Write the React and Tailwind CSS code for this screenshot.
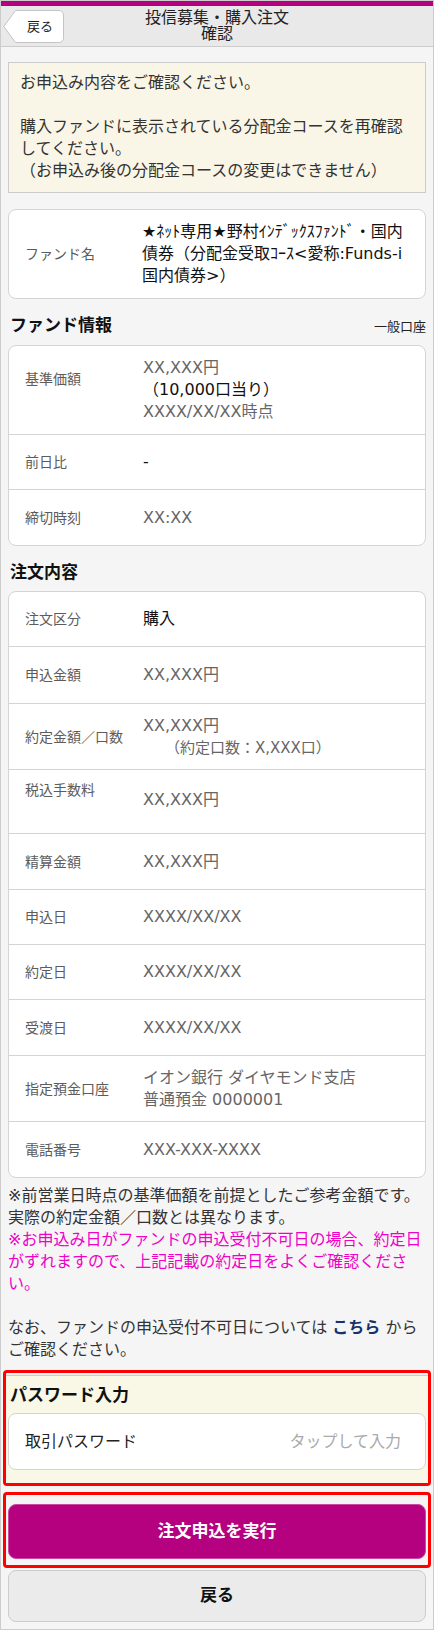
import React from 'react';

// 英数字は Verdana 系の幅に合わせて DejaVu Sans、和文は Noto Sans CJK JP
const font = { fontFamily: '"DejaVu Sans", "Noto Sans CJK JP", sans-serif' };

// 明細の1行（ラベル＋値）
const Row = ({ label, children, className, labelClass = '', valueClass = '', last = false }) => (
  <div className={`flex pl-4 pr-3 ${last ? '' : 'border-b border-[#d4d4d4]'} ${className}`}>
    <div className={`w-[118px] shrink-0 text-[14px] leading-[22px] text-[#5c5c5c] ${labelClass}`}>{label}</div>
    <div className={`flex-1 text-[16px] leading-[22px] ${valueClass}`}>{children}</div>
  </div>
);

const BackShape = () => (
  <svg width="61" height="33" viewBox="0 0 61 33" className="absolute left-0 top-0">
    <path
      d="M12.5 0.5 H56 a4.5 4.5 0 0 1 4.5 4.5 V28 a4.5 4.5 0 0 1 -4.5 4.5 H12.5 L0.8 16.5 Z"
      fill="#ffffff"
      stroke="#c4c4c4"
    />
  </svg>
);

const App = () => {
  return (
    <div style={font} className="w-[434px] h-[1630px] bg-[#f5f5f5] border border-[#cccccc] text-[#222]">
      {/* ヘッダー */}
      <div className="h-[5px] bg-[#b5007f]" />
      <div className="relative h-[41px] bg-[#e9e9e9] border-b border-[#cccccc] flex items-center justify-center">
        <button className="absolute left-[2px] top-[4px] w-[61px] h-[33px]">
          <BackShape />
          <span className="relative block pl-[24px] text-left text-[13px] leading-[33px] text-[#222]">戻る</span>
        </button>
        <div className="text-center text-[16px] leading-[16px] text-[#222]">
          <div>投信募集・購入注文</div>
          <div>確認</div>
        </div>
      </div>

      <div className="px-[7px]">
        {/* 注意書き */}
        <div className="mt-[15px] bg-[#faf6e7] border border-[#cccccc] pl-[11px] pr-[11px] pt-[9px] pb-[10px] text-[16px] leading-[22px] text-[#333]">
          <p>お申込み内容をご確認ください。</p>
          <p>&nbsp;</p>
          <p>購入ファンドに表示されている分配金コースを再確認してください。</p>
          <p>（お申込み後の分配金コースの変更はできません）</p>
        </div>

        {/* ファンド名 */}
        <div className="mt-[16px] bg-white border border-[#d4d4d4] rounded-[8px] flex items-center pl-4 pr-3 pt-[11px] pb-[11px]">
          <div className="w-[117px] shrink-0 text-[14px] leading-[22px] text-[#5c5c5c]">ファンド名</div>
          <div className="flex-1 text-[16px] leading-[22px] text-[#111] whitespace-nowrap">
            ★ﾈｯﾄ専用★野村ｲﾝﾃﾞｯｸｽﾌｧﾝﾄﾞ・国内<br />
            債券（分配金受取ｺｰｽ&lt;愛称:Funds-i<br />
            国内債券&gt;）
          </div>
        </div>

        {/* ファンド情報 */}
        <div className="mt-[15px] mb-[9px] flex items-end justify-between pl-[2px]">
          <h2 className="text-[17px] leading-[22px] font-bold text-[#111]">ファンド情報</h2>
          <span className="text-[13px] leading-[18px] text-[#222]">一般口座</span>
        </div>
        <div className="bg-white border border-[#d4d4d4] rounded-[8px]">
          <Row label="基準価額" className="items-start h-[89px] pt-[11px]" labelClass="pt-[11px]">
            <div className="text-[#666]">XX,XXX円</div>
            <div className="text-[#111]">（10,000口当り）</div>
            <div className="text-[#666]">XXXX/XX/XX時点</div>
          </Row>
          <Row label="前日比" className="items-center h-[55px]" valueClass="text-[#111]">-</Row>
          <Row label="締切時刻" className="items-center h-[55px]" valueClass="text-[#666]" last>XX:XX</Row>
        </div>

        {/* 注文内容 */}
        <h2 className="mt-[15px] mb-[8px] pl-[2px] text-[17px] leading-[22px] font-bold text-[#111]">注文内容</h2>
        <div className="bg-white border border-[#d4d4d4] rounded-[8px]">
          <Row label="注文区分" className="items-center h-[55px]" valueClass="text-[#111]">購入</Row>
          <Row label="申込金額" className="items-center h-[57px]" valueClass="text-[#666]">XX,XXX円</Row>
          <Row label="約定金額／口数" className="items-center h-[66px]" valueClass="text-[#666]">
            <div>XX,XXX円</div>
            <div className="pl-[22px] text-[15px]">（約定口数：X,XXX口）</div>
          </Row>
          <Row label="税込手数料" className="items-start h-[64px]" labelClass="pt-[9px]" valueClass="pt-[19px] text-[#666]">
            XX,XXX円
          </Row>
          <Row label="精算金額" className="items-center h-[56px]" valueClass="text-[#666]">XX,XXX円</Row>
          <Row label="申込日" className="items-center h-[55px]" valueClass="text-[#666]">XXXX/XX/XX</Row>
          <Row label="約定日" className="items-center h-[55px]" valueClass="text-[#666]">XXXX/XX/XX</Row>
          <Row label="受渡日" className="items-center h-[56px]" valueClass="text-[#666]">XXXX/XX/XX</Row>
          <Row label="指定預金口座" className="items-center h-[66px]" valueClass="text-[#666]">
            <div>イオン銀行 ダイヤモンド支店</div>
            <div>普通預金 0000001</div>
          </Row>
          <Row label="電話番号" className="items-center h-[55px]" valueClass="text-[#666]" last>XXX-XXX-XXXX</Row>
        </div>

        {/* 注記 */}
        <div className="mt-[7px] text-[16px] leading-[22px] text-[#333]">
          <p>※前営業日時点の基準価額を前提としたご参考金額です。実際の約定金額／口数とは異なります。</p>
          <p className="text-[#f000c8]">※お申込み日がファンドの申込受付不可日の場合、約定日がずれますので、上記記載の約定日をよくご確認ください。</p>
          <p>&nbsp;</p>
          <p>
            なお、ファンドの申込受付不可日については <span className="font-bold text-[#16326a]">こちら</span> からご確認ください。
          </p>
        </div>
      </div>

      {/* パスワード入力 */}
      <div className="mx-[2px] mt-[9px] border-[3px] border-[#ff0000] rounded-[4px] pt-[2px]">
        <div className="bg-[#f9f7e6] border-t border-[#cccccc] px-[2px] pt-[8px] pb-[13px]">
          <h2 className="pl-[2px] text-[17px] leading-[22px] font-bold text-[#111]">パスワード入力</h2>
          <div className="mt-[7px] h-[57px] bg-white border border-[#d4d4d4] rounded-[8px] flex items-center justify-between pl-4 pr-[24px]">
            <span className="text-[16px] text-[#222]">取引パスワード</span>
            <span className="text-[16px] text-[#aaaaaa]">タップして入力</span>
          </div>
        </div>
      </div>

      {/* 実行ボタン */}
      <div className="mx-[2px] mt-[6px] border-[3px] border-[#ff0000] rounded-[4px] px-[2px] pt-[9px] pb-[6px]">
        <button className="w-full h-[55px] rounded-[8px] bg-[#b5007f] border border-[#c94a9f] text-white text-[17px] font-bold">
          注文申込を実行
        </button>
      </div>

      <div className="px-[7px] mt-[2px]">
        <button className="w-full h-[52px] rounded-[8px] bg-[#ebebeb] border border-[#cccccc] text-[#111] text-[17px] font-bold">
          戻る
        </button>
      </div>
    </div>
  );
};

export default App;
